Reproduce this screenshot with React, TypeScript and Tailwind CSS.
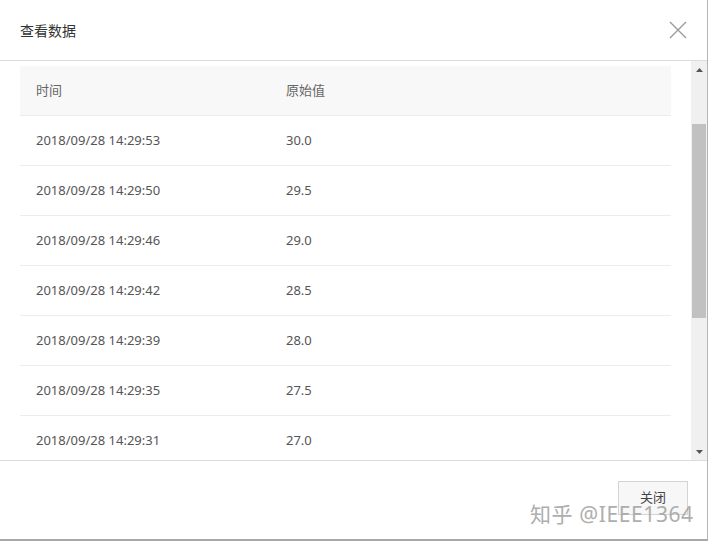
import React from "react";

const rows = [
  { time: "2018/09/28 14:29:53", value: "30.0" },
  { time: "2018/09/28 14:29:50", value: "29.5" },
  { time: "2018/09/28 14:29:46", value: "29.0" },
  { time: "2018/09/28 14:29:42", value: "28.5" },
  { time: "2018/09/28 14:29:39", value: "28.0" },
  { time: "2018/09/28 14:29:35", value: "27.5" },
  { time: "2018/09/28 14:29:31", value: "27.0" },
];

const font = {
  fontFamily: '"Noto Sans", "Noto Sans CJK SC", sans-serif',
};

export default function App() {
  return (
    <div
      className="relative h-[543px] w-[710px] overflow-hidden bg-white"
      style={font}
    >
      <div className="flex h-[541px] w-[708px] flex-col border-r border-b-2 border-r-[#b5b5b5] border-b-[#a8a8a8] bg-white">
        {/* header */}
        <div className="flex h-[61px] shrink-0 items-center justify-between border-b border-[#dcdcdc] pl-5 pr-[20px]">
          <span className="text-[14px] text-[#333]">查看数据</span>
          <svg width="18" height="18" viewBox="0 0 18 18">
            <path
              d="M1 1 L17 17 M17 1 L1 17"
              stroke="#9a9a9a"
              strokeWidth="1.3"
              fill="none"
            />
          </svg>
        </div>

        {/* body */}
        <div className="flex h-[400px] shrink-0 border-b border-[#dcdcdc]">
          <div className="flex-1 overflow-hidden px-5 pt-[5px]">
            <div className="flex h-[50px] items-center border-b border-[#ececec] bg-[#f8f8f8] pt-[1px] text-[13px] text-[#666]">
              <div className="w-[266px] pl-4">时间</div>
              <div>原始值</div>
            </div>
            {rows.map((r) => (
              <div
                key={r.time}
                className="flex h-[50px] items-center border-b border-[#ececec] pt-[1px] text-[13px] text-[#555]"
              >
                <div className="w-[266px] pl-4">{r.time}</div>
                <div>{r.value}</div>
              </div>
            ))}
          </div>
          {/* scrollbar */}
          <div className="flex w-[16px] flex-col bg-[#f0f0f0]">
            <div className="flex h-[17px] items-center justify-center">
              <svg width="7" height="4" viewBox="0 0 7 4">
                <path d="M0 4 L3.5 0 L7 4 Z" fill="#555" />
              </svg>
            </div>
            <div className="mx-[1px] mt-[46px] h-[194px] bg-[#c1c1c1]" />
            <div className="flex-1" />
            <div className="flex h-[17px] items-center justify-center">
              <svg width="7" height="4" viewBox="0 0 7 4">
                <path d="M0 0 L7 0 L3.5 4 Z" fill="#555" />
              </svg>
            </div>
          </div>
        </div>

        {/* footer */}
        <div className="flex flex-1 items-start justify-end pr-[19px] pt-[20px]">
          <button className="h-[34px] w-[70px] border border-[#d4d4d4] bg-[#f7f7f7] text-[13px] text-[#444]">
            关闭
          </button>
        </div>
      </div>

      {/* watermark */}
      <div className="absolute left-[530px] top-[499px] text-[21px] tracking-[0.6px] text-[#a6a6a6] opacity-90">
        知乎 @IEEE1364
      </div>
    </div>
  );
}
